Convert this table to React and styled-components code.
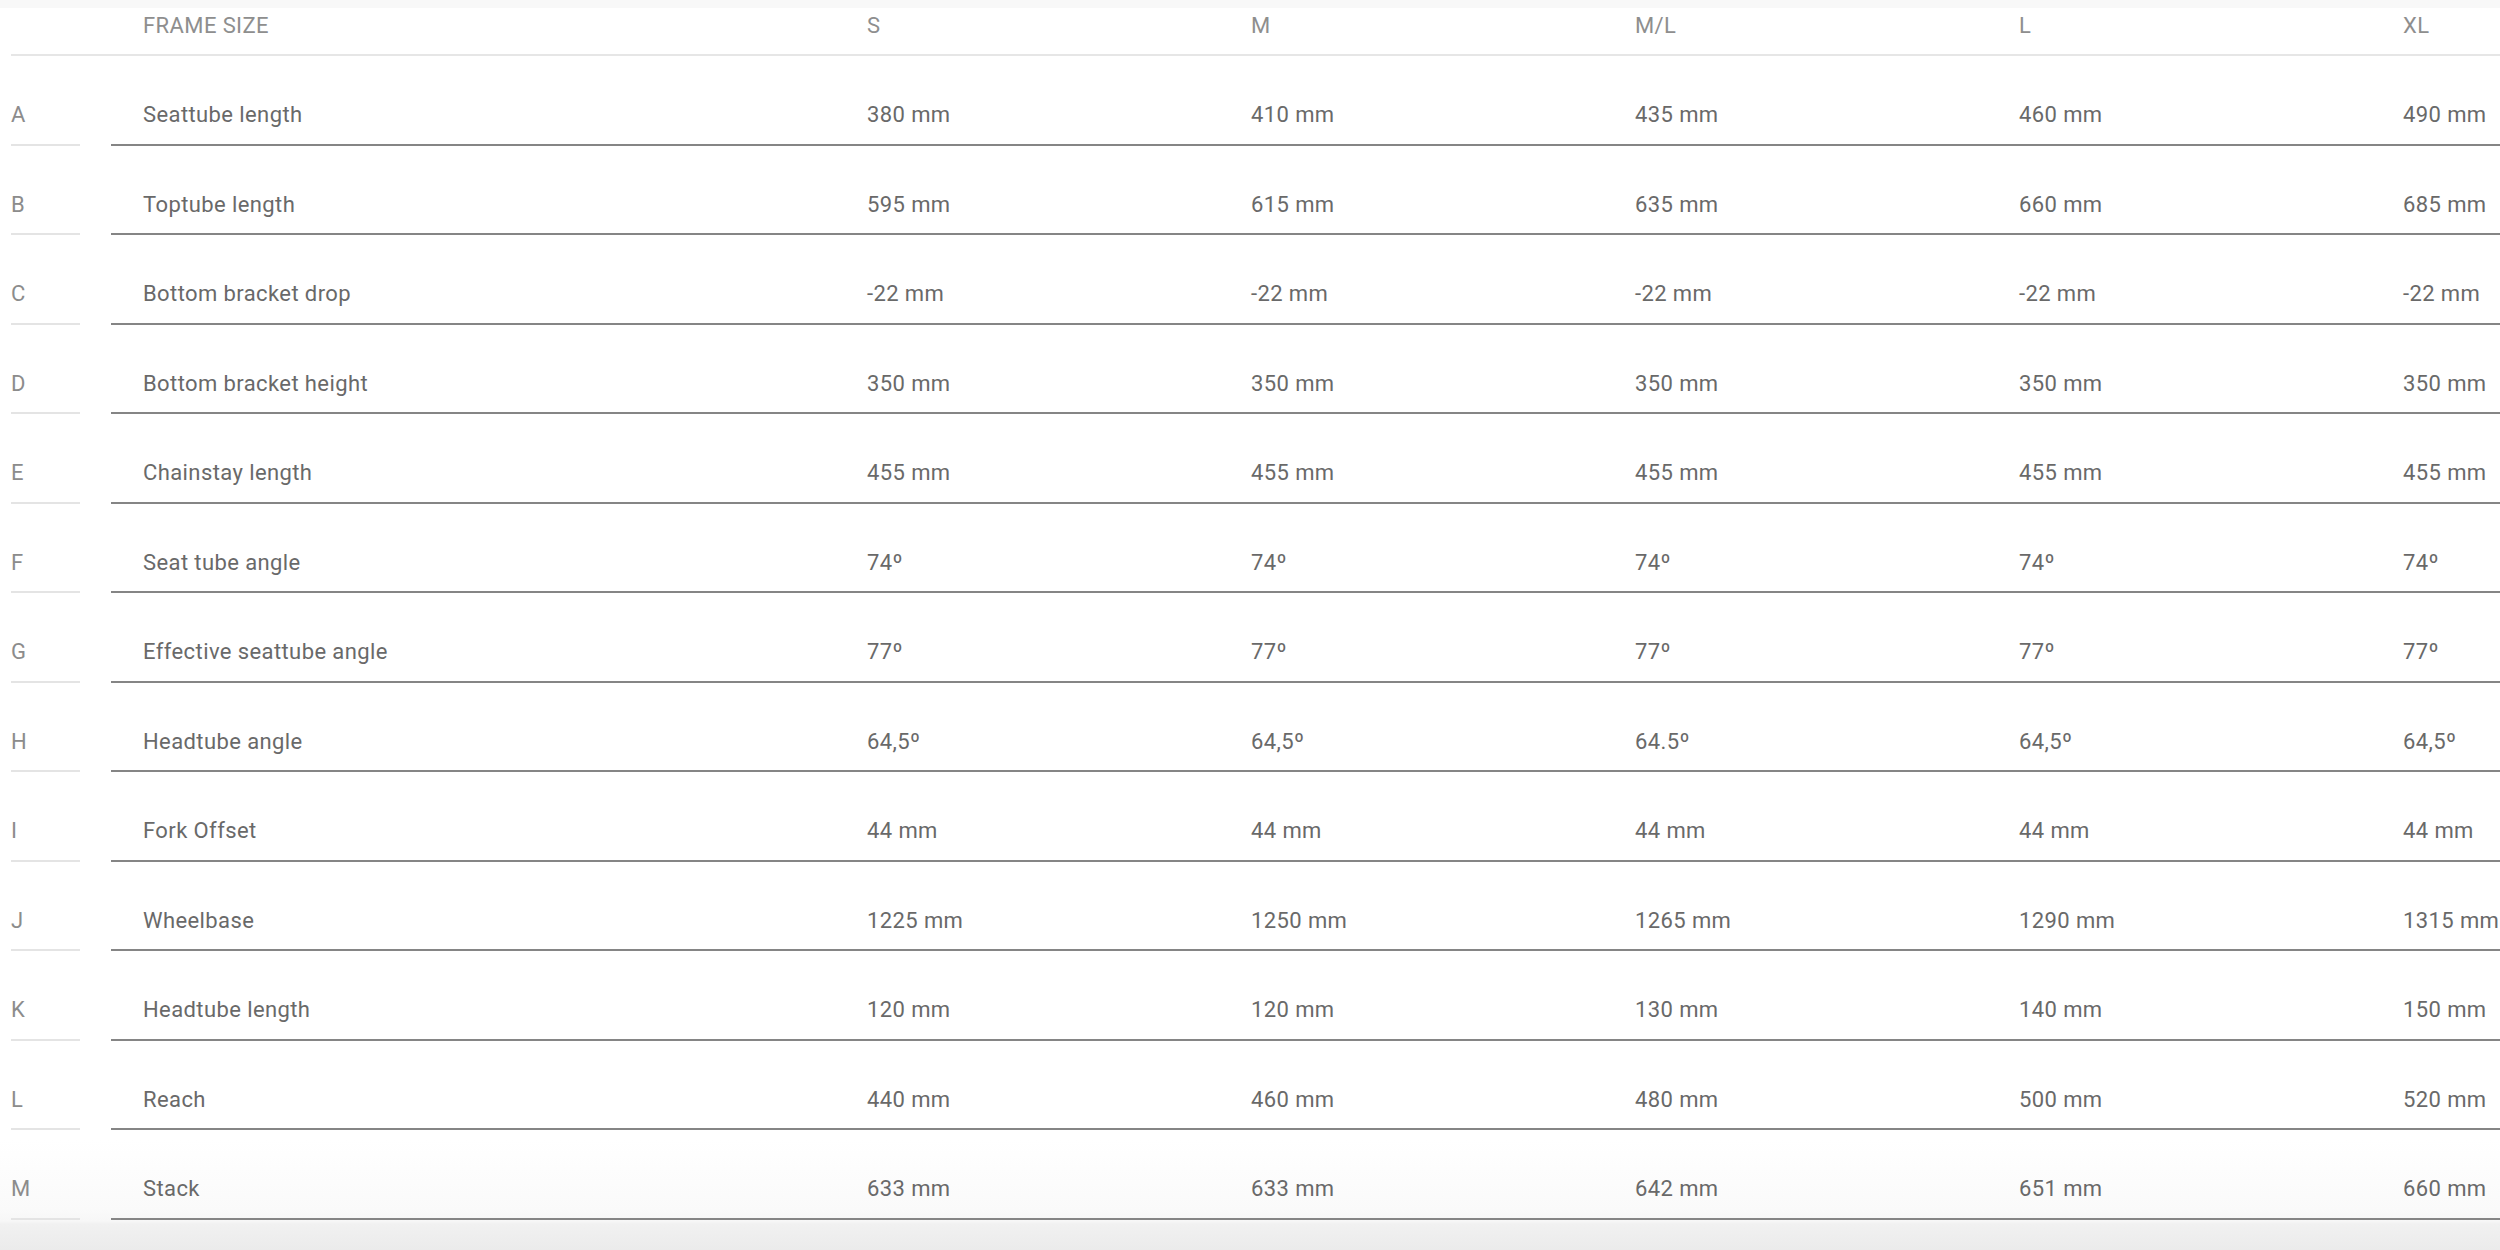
import React from 'react'
import styled, { createGlobalStyle } from 'styled-components'

const GlobalStyle = createGlobalStyle`
  html, body {
    margin: 0;
    padding: 0;
    background: #ffffff;
  }
  body {
    font-family: Roboto, 'Liberation Sans', sans-serif;
    overflow: hidden;
  }
`

const sizes = ['S', 'M', 'M/L', 'L', 'XL']

const geometry = [
  ['A', 'Seattube length', ['380 mm', '410 mm', '435 mm', '460 mm', '490 mm']],
  ['B', 'Toptube length', ['595 mm', '615 mm', '635 mm', '660 mm', '685 mm']],
  ['C', 'Bottom bracket drop', ['-22 mm', '-22 mm', '-22 mm', '-22 mm', '-22 mm']],
  ['D', 'Bottom bracket height', ['350 mm', '350 mm', '350 mm', '350 mm', '350 mm']],
  ['E', 'Chainstay length', ['455 mm', '455 mm', '455 mm', '455 mm', '455 mm']],
  ['F', 'Seat tube angle', ['74º', '74º', '74º', '74º', '74º']],
  ['G', 'Effective seattube angle', ['77º', '77º', '77º', '77º', '77º']],
  ['H', 'Headtube angle', ['64,5º', '64,5º', '64.5º', '64,5º', '64,5º']],
  ['I', 'Fork Offset', ['44 mm', '44 mm', '44 mm', '44 mm', '44 mm']],
  ['J', 'Wheelbase', ['1225 mm', '1250 mm', '1265 mm', '1290 mm', '1315 mm']],
  ['K', 'Headtube length', ['120 mm', '120 mm', '130 mm', '140 mm', '150 mm']],
  ['L', 'Reach', ['440 mm', '460 mm', '480 mm', '500 mm', '520 mm']],
  ['M', 'Stack', ['633 mm', '633 mm', '642 mm', '651 mm', '660 mm']],
]

const Page = styled.div`
  width: 2500px;
  height: 1250px;
  overflow: hidden;
  background: linear-gradient(
    to bottom,
    #ffffff 0px,
    #ffffff 1140px,
    #fafafa 1210px,
    #f7f7f7 1221px,
    #f1f1f1 1224px,
    #ebebeb 1250px
  );
`

const TopStrip = styled.div`
  height: 8px;
  background: #f8f8f8;
`

const Table = styled.div`
  display: flex;
  flex-direction: column;
  width: 2800px;
`

const HeaderRow = styled.div`
  display: flex;
  align-items: flex-end;
  height: 46px;
  margin-left: 11px;
  border-bottom: 2px solid #e6e6e6;
  box-sizing: content-box;
`

const Row = styled.div`
  display: flex;
  gap: 31px;
  height: 89.5px;
  padding-left: 11px;
  box-sizing: border-box;
`

const Letter = styled.div`
  flex: none;
  width: 69px;
  display: flex;
  align-items: flex-end;
  padding-bottom: 17.5px;
  box-sizing: border-box;
  border-bottom: 2px solid #e4e4e4;
  font-size: 22px;
  line-height: 22px;
  letter-spacing: 0.4px;
  color: #8c8c8c;
`

const Cells = styled.div`
  flex: none;
  display: grid;
  grid-template-columns: 724px repeat(5, 384px);
  align-items: end;
  padding-left: ${p => p.$indent}px;
  padding-bottom: 17.5px;
  box-sizing: border-box;
  width: ${p => p.$width}px;
  border-bottom: ${p => (p.$plain ? 'none' : '2px solid #858585')};
`

const Cell = styled.div`
  font-size: 22px;
  line-height: 22px;
  letter-spacing: 0.4px;
  color: ${p => (p.$head ? '#8e8e8e' : '#696969')};
  white-space: nowrap;
  text-transform: ${p => (p.$head ? 'uppercase' : 'none')};
`

const HeaderCells = () => (
  <Cells $indent={132} $width={2700} $plain>
    <Cell $head>Frame size</Cell>
    {sizes.map(s => (
      <Cell $head key={s}>
        {s}
      </Cell>
    ))}
  </Cells>
)

export default function App() {
  return (
    <>
      <GlobalStyle />
      <Page>
        <TopStrip />
        <Table>
          <HeaderRow>
            <HeaderCells />
          </HeaderRow>
          {geometry.map(([letter, label, values]) => (
            <Row key={letter}>
              <Letter>{letter}</Letter>
              <Cells $indent={32} $width={2700}>
                <Cell>{label}</Cell>
                {values.map((v, i) => (
                  <Cell key={i}>{v}</Cell>
                ))}
              </Cells>
            </Row>
          ))}
        </Table>
      </Page>
    </>
  )
}
